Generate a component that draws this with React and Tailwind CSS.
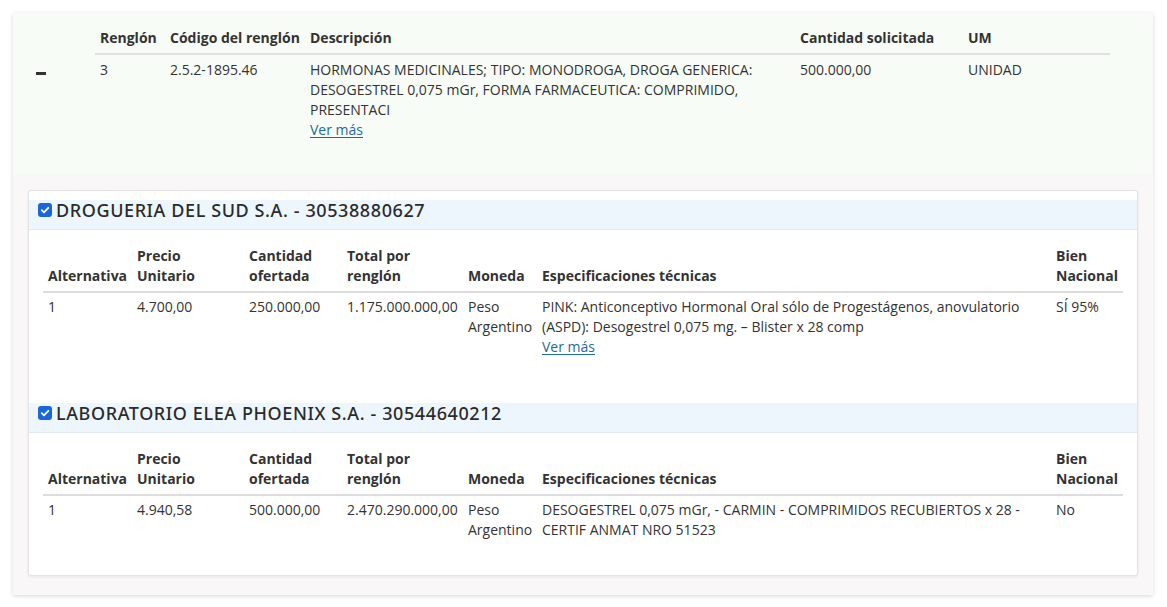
import React from 'react';

const textFont = { fontFamily: '"Open Sans", "Liberation Sans", sans-serif' };

const offers = [
  {
    name: 'DROGUERIA DEL SUD S.A. - 30538880627',
    alt: '1',
    price: '4.700,00',
    qty: '250.000,00',
    total: '1.175.000.000,00',
    spec: 'PINK: Anticonceptivo Hormonal Oral sólo de Progestágenos, anovulatorio (ASPD): Desogestrel 0,075 mg. – Blister x 28 comp',
    more: true,
    national: 'SÍ 95%',
  },
  {
    name: 'LABORATORIO ELEA PHOENIX S.A. - 30544640212',
    alt: '1',
    price: '4.940,58',
    qty: '500.000,00',
    total: '2.470.290.000,00',
    spec: 'DESOGESTREL 0,075 mGr, - CARMIN - COMPRIMIDOS RECUBIERTOS x 28 - CERTIF ANMAT NRO 51523',
    more: false,
    national: 'No',
  },
];

const Check = () => (
  <div className="w-[14px] h-[14px] rounded-[3px] bg-[#1b66d9] flex items-center justify-center shrink-0">
    <svg width="10" height="10" viewBox="0 0 10 10">
      <path d="M1.8 5.2 L4 7.3 L8.3 2.8" fill="none" stroke="#fff" strokeWidth="1.8" strokeLinecap="round" strokeLinejoin="round" />
    </svg>
  </div>
);

const VerMas = () => (
  <a className="text-[#1d6a9b] underline underline-offset-2 cursor-pointer">Ver más</a>
);

const Offer = ({ offer }) => (
  <div>
    <div className="flex items-center gap-[4px] h-[30px] pb-[10px] pl-[9px] bg-[#eef6fd] border-b border-[#e2e8ee]">
      <Check />
      <span
        className="text-[18px] tracking-[0.6px] font-medium text-[#2b2b2b] leading-none"
        style={{ fontFamily: '"Noto Sans", "DejaVu Sans", sans-serif' }}
      >
        {offer.name}
      </span>
    </div>
    <div className="px-[14px] pt-[12px]">
      <table className="w-full table-fixed border-collapse text-[14px] leading-[20px] text-[#333]">
        <colgroup>
          <col className="w-[89px]" />
          <col className="w-[112px]" />
          <col className="w-[98px]" />
          <col className="w-[121px]" />
          <col className="w-[74px]" />
          <col />
          <col className="w-[72px]" />
        </colgroup>
        <thead>
          <tr className="border-b-2 border-[#dddddd] text-left align-bottom">
            <th className="pl-[5px] pt-[4px] pb-[5px] font-bold">Alternativa</th>
            <th className="pl-[5px] pt-[4px] pb-[5px] font-bold">Precio<br />Unitario</th>
            <th className="pl-[5px] pt-[4px] pb-[5px] font-bold">Cantidad<br />ofertada</th>
            <th className="pl-[5px] pt-[4px] pb-[5px] font-bold">Total por<br />renglón</th>
            <th className="pl-[5px] pt-[4px] pb-[5px] font-bold">Moneda</th>
            <th className="pl-[5px] pt-[4px] pb-[5px] font-bold">Especificaciones técnicas</th>
            <th className="pl-[5px] pt-[4px] pb-[5px] font-bold">Bien<br />Nacional</th>
          </tr>
        </thead>
        <tbody>
          <tr className="align-top">
            <td className="pl-[5px] pt-[4px]">{offer.alt}</td>
            <td className="pl-[5px] pt-[4px]">{offer.price}</td>
            <td className="pl-[5px] pt-[4px]">{offer.qty}</td>
            <td className="pl-[5px] pt-[4px] whitespace-nowrap">{offer.total}</td>
            <td className="pl-[5px] pt-[4px]">Peso Argentino</td>
            <td className="pl-[5px] pt-[4px] pr-[8px]">
              {offer.spec}
              {offer.more && (
                <div>
                  <VerMas />
                </div>
              )}
            </td>
            <td className="pl-[5px] pt-[4px]">{offer.national}</td>
          </tr>
        </tbody>
      </table>
    </div>
  </div>
);

export default function App() {
  return (
    <div className="min-h-[607px] bg-white pt-[13px] px-[13px]" style={textFont}>
      <div className="w-[1140px] shadow-[0_1px_4px_rgba(0,0,0,0.16)] rounded-[2px] overflow-hidden">
        {/* Renglón */}
        <div className="bg-[#f7fcf7] flex pt-[11px] pb-[35px]">
          <div className="w-[82px] shrink-0 flex pl-[23px] pt-[48px]">
            <div className="w-[10px] h-[3px] bg-[#333]" />
          </div>
          <table className="w-[1015px] table-fixed border-collapse text-[14px] leading-[20px] text-[#333]">
            <colgroup>
              <col className="w-[70px]" />
              <col className="w-[140px]" />
              <col className="w-[490px]" />
              <col className="w-[168px]" />
              <col />
            </colgroup>
            <thead>
              <tr className="border-b-2 border-[#e0e0e0] text-left">
                <th className="pl-[5px] pt-[4px] pb-[5px] font-bold">Renglón</th>
                <th className="pl-[5px] pt-[4px] pb-[5px] font-bold">Código del renglón</th>
                <th className="pl-[5px] pt-[4px] pb-[5px] font-bold">Descripción</th>
                <th className="pl-[5px] pt-[4px] pb-[5px] font-bold">Cantidad solicitada</th>
                <th className="pl-[5px] pt-[4px] pb-[5px] font-bold">UM</th>
              </tr>
            </thead>
            <tbody>
              <tr className="align-top">
                <td className="pl-[5px] pt-[5px]">3</td>
                <td className="pl-[5px] pt-[5px]">2.5.2-1895.46</td>
                <td className="pl-[5px] pt-[5px] pr-[40px]">
                  HORMONAS MEDICINALES; TIPO: MONODROGA, DROGA GENERICA: DESOGESTREL 0,075 mGr, FORMA FARMACEUTICA: COMPRIMIDO, PRESENTACI
                  <div>
                    <VerMas />
                  </div>
                </td>
                <td className="pl-[5px] pt-[5px]">500.000,00</td>
                <td className="pl-[5px] pt-[5px]">UNIDAD</td>
              </tr>
            </tbody>
          </table>
        </div>

        {/* Ofertas */}
        <div className="bg-[#f9f7f7] p-[15px] pb-[19px]">
          <div className="bg-white border border-[#e3e3e3] rounded-[3px] shadow-[0_1px_3px_rgba(0,0,0,0.08)] pt-[9px] pb-[35px]">
            <Offer offer={offers[0]} />
            <div className="h-[46px]" />
            <Offer offer={offers[1]} />
          </div>
        </div>
      </div>
    </div>
  );
}
